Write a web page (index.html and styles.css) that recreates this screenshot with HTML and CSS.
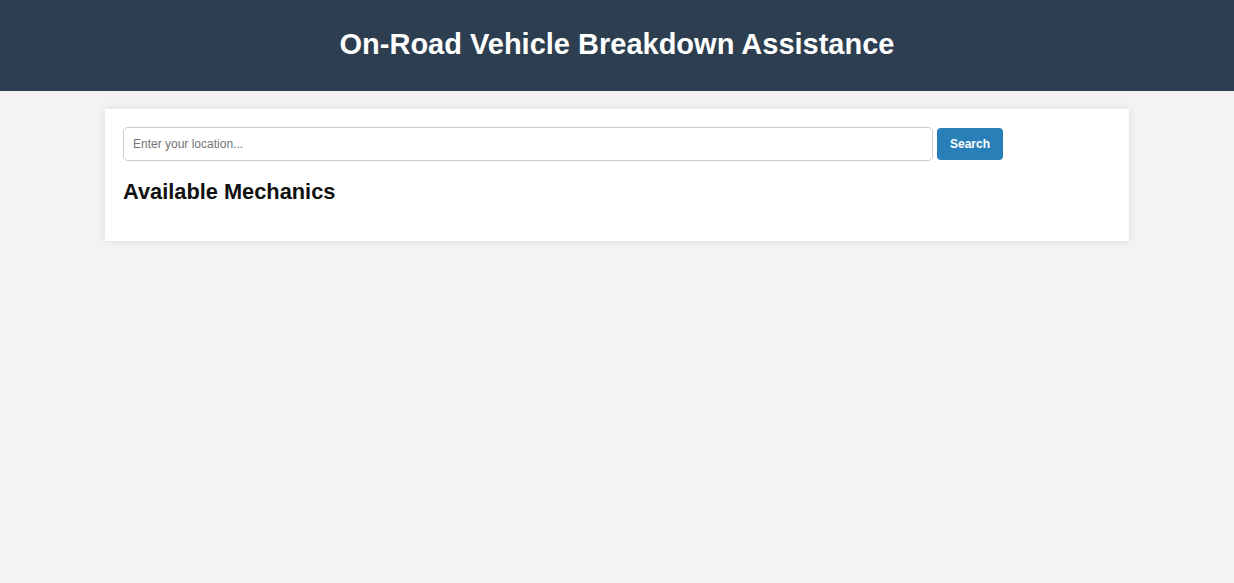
FILE: index.html
```html
<!DOCTYPE html>
<html>
<head>
<meta charset="utf-8">
<title>On-Road Vehicle Breakdown Assistance</title>
<link rel="stylesheet" href="styles.css">
</head>
<body>
<header class="site-header">
  <h1 class="site-title">On-Road Vehicle Breakdown Assistance</h1>
</header>
<main class="container">
  <div class="search-row">
    <input class="search-input" type="text" placeholder="Enter your location...">
    <button class="search-btn" type="button">Search</button>
  </div>
  <h2 class="section-title">Available Mechanics</h2>
</main>
</body>
</html>
```

FILE: styles.css
```css
* { box-sizing: border-box; }
html, body { margin: 0; padding: 0; }
body {
  background: #f3f3f3;
  font-family: "Liberation Sans", Arial, sans-serif;
  color: #111;
  min-height: 583px;
}
.site-header {
  background: #2c3e50;
  height: 91px;
  display: flex;
  align-items: center;
  justify-content: center;
}
.site-title {
  margin: 0 0 2px;
  color: #fff;
  font-size: 29px;
  font-weight: bold;
}
.container {
  width: 1024px;
  margin: 18px auto 0;
  background: #fff;
  padding: 18px 18px 20px;
  box-shadow: 0 0 8px rgba(0,0,0,0.1);
  min-height: 132px;
}
.search-row {
  display: flex;
  align-items: center;
  gap: 4px;
}
.search-input {
  width: 810px;
  height: 34px;
  padding: 0 9px;
  border: 1px solid #ccc;
  border-radius: 5px;
  font-family: "Liberation Sans", Arial, sans-serif;
  font-size: 12px;
  color: #333;
}
.search-input::placeholder { color: #757575; }
.search-btn {
  height: 32px;
  width: 66px;
  border: none;
  border-radius: 4px;
  background: #2980b9;
  color: #fff;
  font-family: "Liberation Sans", Arial, sans-serif;
  font-size: 12px;
  font-weight: bold;
  padding: 0;
}
.section-title {
  margin: 18px 0 0;
  font-size: 21.8px;
  font-weight: bold;
  color: #111;
}
```
